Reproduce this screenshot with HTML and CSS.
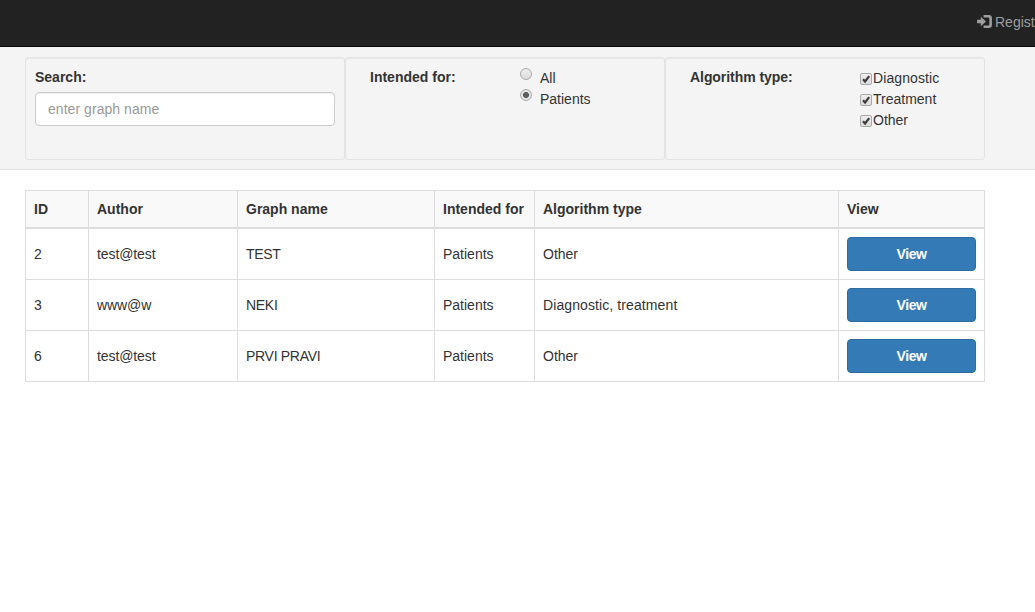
FILE: index.html
```html
<!DOCTYPE html>
<html lang="en">
<head>
<meta charset="utf-8">
<title>Graphs</title>
<link rel="stylesheet" href="styles.css">
</head>
<body>
<nav class="navbar">
  <a class="nav-link" href="#"><svg class="login-icon" viewBox="0 0 16 14" width="16" height="14"><path d="M0 5.2h4V2L9.6 7 4 12V8.8H0z"/><path d="M7 0h5.8Q16 0 16 3.2v7.6q0 3.2-3.2 3.2H7v-2.6h5q1.2 0 1.2-1.2V3.8q0-1.2-1.2-1.2H7z"/></svg><span>Register</span></a>
</nav>
<section class="filters">
  <div class="well">
    <label class="title" for="q">Search:</label>
    <input class="search" id="q" type="text" placeholder="enter graph name">
  </div>
  <div class="well split">
    <span class="title">Intended for:</span>
    <div class="options">
      <label class="radio-row"><input class="radio" type="radio" name="for"><span>All</span></label>
      <label class="radio-row"><input class="radio" type="radio" name="for" checked><span>Patients</span></label>
    </div>
  </div>
  <div class="well split wide">
    <span class="title">Algorithm type:</span>
    <div class="options">
      <label class="check-row"><span class="check"><svg viewBox="0 0 12 12" width="12" height="12"><path d="M3 6.2l2.1 2.3L9.2 3.2"/></svg></span><span class="loose">Diagnostic</span></label>
      <label class="check-row"><span class="check"><svg viewBox="0 0 12 12" width="12" height="12"><path d="M3 6.2l2.1 2.3L9.2 3.2"/></svg></span><span>Treatment</span></label>
      <label class="check-row"><span class="check"><svg viewBox="0 0 12 12" width="12" height="12"><path d="M3 6.2l2.1 2.3L9.2 3.2"/></svg></span><span>Other</span></label>
    </div>
  </div>
</section>
<table class="graphs">
  <colgroup><col class="c-id"><col class="c-author"><col class="c-name"><col class="c-for"><col class="c-type"><col class="c-view"></colgroup>
  <thead>
    <tr><th>ID</th><th>Author</th><th>Graph name</th><th>Intended for</th><th>Algorithm type</th><th>View</th></tr>
  </thead>
  <tbody>
    <tr><td>2</td><td class="snug">test@test</td><td class="tight">TEST</td><td>Patients</td><td>Other</td><td><button class="btn">View</button></td></tr>
    <tr><td>3</td><td class="snug">www@w</td><td class="tight">NEKI</td><td>Patients</td><td class="loose">Diagnostic, treatment</td><td><button class="btn">View</button></td></tr>
    <tr><td>6</td><td class="snug">test@test</td><td class="tight">PRVI PRAVI</td><td>Patients</td><td>Other</td><td><button class="btn">View</button></td></tr>
  </tbody>
</table>
</body>
</html>
```
FILE: styles.css
```css
* { box-sizing: border-box; }
html { overflow: hidden; }
body {
  margin: 0;
  background: #fff;
  color: #333;
  font: 14px/20px "Liberation Sans", Arial, sans-serif;
  overflow: hidden;
}
.navbar {
  height: 47px;
  background: #222;
  border-bottom: 1px solid #080808;
  padding: 12px 0 0 977px;
  overflow: hidden;
}
.nav-link {
  display: flex;
  align-items: flex-start;
  gap: 3px;
  width: max-content;
  color: #9d9d9d;
  text-decoration: none;
}
.login-icon { fill: currentColor; margin-top: 3px; width: 15px; height: 13px; }
.filters {
  display: flex;
  height: 123px;
  padding: 10px 0 0 25px;
  background: #f4f4f4;
  border-bottom: 1px solid #e3e3e3;
}
.well {
  width: 320px;
  height: 103px;
  padding: 9px;
  border: 1px solid #e3e3e3;
  border-radius: 3px;
  background: #f4f4f4;
  box-shadow: inset 0 1px 1px rgba(0, 0, 0, .05);
}
.title { display: block; font-weight: bold; }
.search {
  display: block;
  width: 300px;
  height: 34px;
  margin-top: 5px;
  padding: 6px 12px;
  border: 1px solid #ccc;
  border-radius: 4px;
  background: #fff;
  box-shadow: inset 0 1px 1px rgba(0, 0, 0, .075);
  font: inherit;
}
.search::placeholder { color: #999; opacity: 1; letter-spacing: .05px; }
.split { display: flex; padding-left: 24px; }
.split .title { width: 150px; }
.wide .title { width: 170px; letter-spacing: -.06px; }
.options { display: flex; flex-direction: column; gap: 1px; padding-top: 1px; }
.radio-row, .check-row { display: flex; height: 20px; }
.radio-row { gap: 8px; }
.radio {
  appearance: none;
  width: 12px;
  height: 12px;
  margin: 0;
  border: 1px solid #aaa;
  border-radius: 50%;
  background: linear-gradient(#eee, #dcdcdc);
}
.radio:checked { background: radial-gradient(circle, #5c5c5c 0 2.6px, #e5e5e5 3.4px); }
.check-row { gap: 1px; }
.check {
  width: 12px;
  height: 12px;
  margin-top: 5px;
  border: 1px solid #aaa;
  border-radius: 2px;
  background: linear-gradient(#eee, #dcdcdc);
}
.check svg { display: block; margin: -1px; fill: none; stroke: #3c3c3c; stroke-width: 2.2; }
.loose { letter-spacing: .1px; }
.snug { letter-spacing: -.1px; }
.tight { letter-spacing: -.3px; }
.graphs {
  width: 960px;
  margin: 20px 0 0 25px;
  border-collapse: collapse;
  table-layout: fixed;
}
.c-id { width: 63px; }
.c-author { width: 149px; }
.c-name { width: 197px; }
.c-for { width: 100px; }
.c-type { width: 304px; }
.c-view { width: 146px; }
.graphs th, .graphs td {
  padding: 8px;
  border: 1px solid #ddd;
  text-align: left;
  vertical-align: middle;
  white-space: nowrap;
}
.graphs th { background: #f9f9f9; border-bottom-width: 2px; }
.btn {
  display: block;
  width: 100%;
  height: 34px;
  padding: 6px 12px;
  border: 1px solid #2e6da4;
  border-radius: 4px;
  background: #337ab7;
  color: #fff;
  font: bold 14px/20px "Liberation Sans", Arial, sans-serif;
  letter-spacing: -.4px;
}
```
